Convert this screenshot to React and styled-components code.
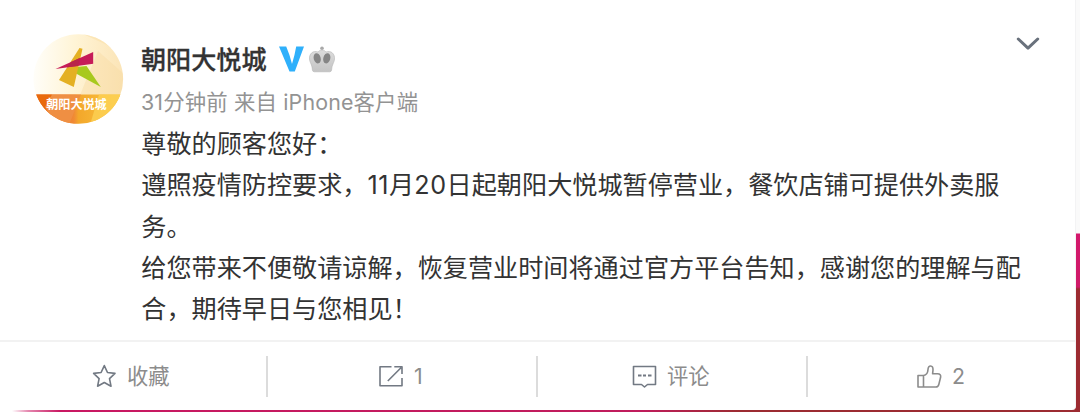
import React from 'react';
import styled, { createGlobalStyle } from 'styled-components';

const Global = createGlobalStyle`
  * { box-sizing: border-box; }
  body {
    margin: 0;
    background: #fff;
    font-family: Inter, "Noto Sans CJK SC", sans-serif;
  }
`;

const Page = styled.div`
  width: 1080px;
  height: 412px;
  overflow: hidden;
  padding: 0 4px 2px 0;
  background:
    linear-gradient(180deg, #fafafa 233px, #d3186c 234px, #cf1a68 287px, #9c2b31 289px) right top / 5px 408px no-repeat,
    linear-gradient(90deg, #fff 12px, #e589b0 28px, #c91862 60px, #c01c5c 640px, #9c2b31 740px) left bottom / 100% 6px no-repeat;
`;

const Card = styled.article`
  display: flex;
  flex-direction: column;
  width: 1076px;
  height: 410px;
  background: #fff;
  border-right: 1px solid #f3f3f4;
  border-radius: 0 0 4px 0;
`;

const Post = styled.div`
  display: flex;
  height: 340px;
  padding: 34px 35px 0 33px;
`;

const Avatar = styled.svg`
  flex: none;
  width: 91px;
  height: 91px;
`;

const Content = styled.div`
  flex: none;
  width: 890px;
  margin-left: 17px;
  padding-top: 7px;
`;

const NameRow = styled.div`
  display: flex;
  align-items: center;
  height: 36px;
`;

const Name = styled.span`
  color: #333;
  font-size: 25.1px;
  font-weight: 500;
  -webkit-text-stroke: 0.3px #333;
  line-height: 36px;
  width: 138px;
  padding-top: 1px;
`;

const Verified = styled.svg`
  width: 25px;
  height: 26px;
`;

const Crown = styled.svg`
  width: 26px;
  height: 27px;
  margin-left: 5px;
`;

const Meta = styled.div`
  margin-top: 10px;
  color: #939393;
  font-size: 21.4px;
  letter-spacing: 0.15px;
  line-height: 30px;
  white-space: pre;
`;

const Body = styled.div`
  margin-top: 7px;
  padding-left: 0.3px;
  color: #333;
  font-size: 25.12px;
  letter-spacing: 0.02px;
  line-height: 41.3px;
  white-space: nowrap;
`;

const Line = styled.div`
  height: 41.3px;
`;

const Digits = styled.span`
  letter-spacing: 0.6px;
`;

const Arrow = styled.svg`
  flex: none;
  width: 24px;
  height: 14px;
  margin: 3px 0 0 -15px;
`;

const Actions = styled.div`
  display: flex;
  height: 70px;
  border-top: 2px solid #f2f2f2;
  align-items: flex-start;
  padding-top: 14px;
`;

const Action = styled.div`
  display: flex;
  align-items: center;
  width: ${(p) => p.$width}px;
  height: 41px;
  padding-left: ${(p) => p.$inset}px;
  border-right: ${(p) => (p.$last ? 'none' : '2px solid #dcdcdc')};
  color: #8c8c8c;
  font-size: 21.3px;
  line-height: 39px;
  svg { flex: none; margin: -2px ${(p) => p.$gap}px 0 0; }
`;

const Icon = ({ children, color = '#727983' }) => (
  <svg width="26" height="26" viewBox="0 0 26 26" fill="none" stroke={color} strokeWidth="1.6" strokeLinejoin="round">
    {children}
  </svg>
);

function BrandAvatar() {
  return (
    <Avatar viewBox="0 0 91 91">
      <defs>
        <clipPath id="disc"><circle cx="45.3" cy="45" r="44.8" /></clipPath>
        <linearGradient id="sky" x1="0" y1=".25" x2="1" y2=".3">
          <stop offset="0" stopColor="#fffefa" />
          <stop offset=".45" stopColor="#fff4d6" />
          <stop offset="1" stopColor="#fbe4b6" />
        </linearGradient>
        <linearGradient id="band">
          <stop offset="0" stopColor="#e45d0d" />
          <stop offset=".45" stopColor="#f08a35" />
          <stop offset=".5" stopColor="#f3a72b" />
          <stop offset="1" stopColor="#fbc943" />
        </linearGradient>
      </defs>
      <g clipPath="url(#disc)">
        <rect width="91" height="91" fill="url(#sky)" />
        <path d="M50 0 72 10 91 22V0Z" fill="#fbe3ae" opacity=".7" />
        <path d="M65 17 91 40V61H47Z" fill="#f8d9a0" opacity=".4" />
        <path d="M0 60.5H91V91H0Z" fill="url(#band)" />
        <path d="M0 60.5H19L12 73 26 91H0Z" fill="#e96a0d" />
        <path d="M19 60.5H48L36 91H23L12 73Z" fill="#ef8f43" />
        <path d="M66 60.5H91V78L57 91Z" fill="#fdd154" opacity=".8" />
      </g>
      <path d="M43 33 53.5 32 67.8 53 43 39.5Z" fill="#a8c91e" />
      <path d="M46.5 14 49.5 14.8 40.8 53 26 46Z" fill="#e4b023" />
      <path d="M22.5 35 60.2 18V29.7Z" fill="#c61b58" />
      <path d="M34.4 33.3 38.2 27.9 46.8 24.1 45.1 32Z" fill="#b8264a" />
      <text x="13.2" y="75.4" fill="#fff" fontSize="12.1" fontWeight="700" fontFamily="'Noto Sans CJK SC', sans-serif">朝阳大悦城</text>
    </Avatar>
  );
}

const lines = [
  '尊敬的顾客您好：',
  '遵照疫情防控要求，11月20日起朝阳大悦城暂停营业，餐饮店铺可提供外卖服',
  '务。',
  '给您带来不便敬请谅解，恢复营业时间将通过官方平台告知，感谢您的理解与配',
  '合，期待早日与您相见！',
];

const renderLine = (line) =>
  line.split(/(\d+)/).map((part, i) => (i % 2 ? <Digits key={i}>{part}</Digits> : part));

export default function App() {
  return (
    <Page>
      <Global />
      <Card>
        <Post>
          <BrandAvatar />
          <Content>
            <NameRow>
              <Name>朝阳大悦城</Name>
              <Verified viewBox="0 0 25 26">
                <path d="M0 .5H7.2Q10.5 8 13 18 16 8 17.2 .5H25L15.8 25.5H10.5Z" fill="#2fb0fb" />
              </Verified>
              <Crown viewBox="0 0 26 27">
                <defs>
                  <linearGradient id="silver" x2="0" y2="1">
                    <stop stopColor="#dcdcdc" /><stop offset="1" stopColor="#c4c4c4" />
                  </linearGradient>
                </defs>
                <circle cx="13" cy="2.3" r="1.8" fill="#a9a9a9" />
                <path d="M13 4C15 4 16 5 17 6 22 4 26 8 25.5 13 25.2 17 23 18 22.6 24Q22.5 25.8 20.5 25.8H5.5Q3.5 25.8 3.4 24C3 18 .8 17 .5 13 0 8 4 4 9 6 10 5 11 4 13 4Z" fill="url(#silver)" stroke="#b5b5b5" strokeWidth=".6" />
                <ellipse cx="8.2" cy="12.3" rx="3.5" ry="5.2" transform="rotate(-15 8.2 12.3)" fill="#858585" />
                <ellipse cx="17.8" cy="12.3" rx="3.5" ry="5.2" transform="rotate(15 17.8 12.3)" fill="#858585" />
              </Crown>
            </NameRow>
            <Meta>31分钟前 来自 iPhone客户端</Meta>
            <Body>{lines.map((line) => <Line key={line}>{renderLine(line)}</Line>)}</Body>
          </Content>
          <Arrow viewBox="0 0 24 14">
            <path d="M2.3 2 12 11.2 21.7 2" fill="none" stroke="#69717c" strokeWidth="3" strokeLinecap="round" strokeLinejoin="round" />
          </Arrow>
        </Post>
        <Actions>
          <Action $width={268} $inset={91} $gap={10}>
            <Icon><path d="M13.3 2.6 16.5 9.5 24 10.4 18.5 15.6 20 23.2 13.3 19.5 6.6 23.2 8.1 15.6 2.6 10.4 10.1 9.5Z" /></Icon>
            收藏
          </Action>
          <Action $width={270} $inset={110} $gap={10}>
            <Icon><path d="M13.5 3.7H2V22.8H24V15M9.8 18 23 4.7M16.3 3.7H24V11" /></Icon>
            1
          </Action>
          <Action $width={270} $inset={93} $gap={10}>
            <Icon><path d="M2.5 3.5H24.5V21.5H16.5L13.5 24 10.5 21.5H2.5Z" /><path d="M7 12.5H10.5M12 12.5H15M17 12.5H20.5" strokeWidth="2" /></Icon>
            评论
          </Action>
          <Action $width={267} $inset={108} $gap={10} $last>
            <Icon color="#8c8c8c"><path d="M2 12.5H7.5V24H2ZM7.5 12.5C10.5 12 11.8 10.5 12 6.5 12.1 1.7 17.2 1.8 17 7L16.6 10.8H21.5C24 10.8 25.1 12 24.6 14.3L22.8 21.5C22.4 23.2 21.5 24 19.8 24H7.5" /></Icon>
            2
          </Action>
        </Actions>
      </Card>
    </Page>
  );
}
